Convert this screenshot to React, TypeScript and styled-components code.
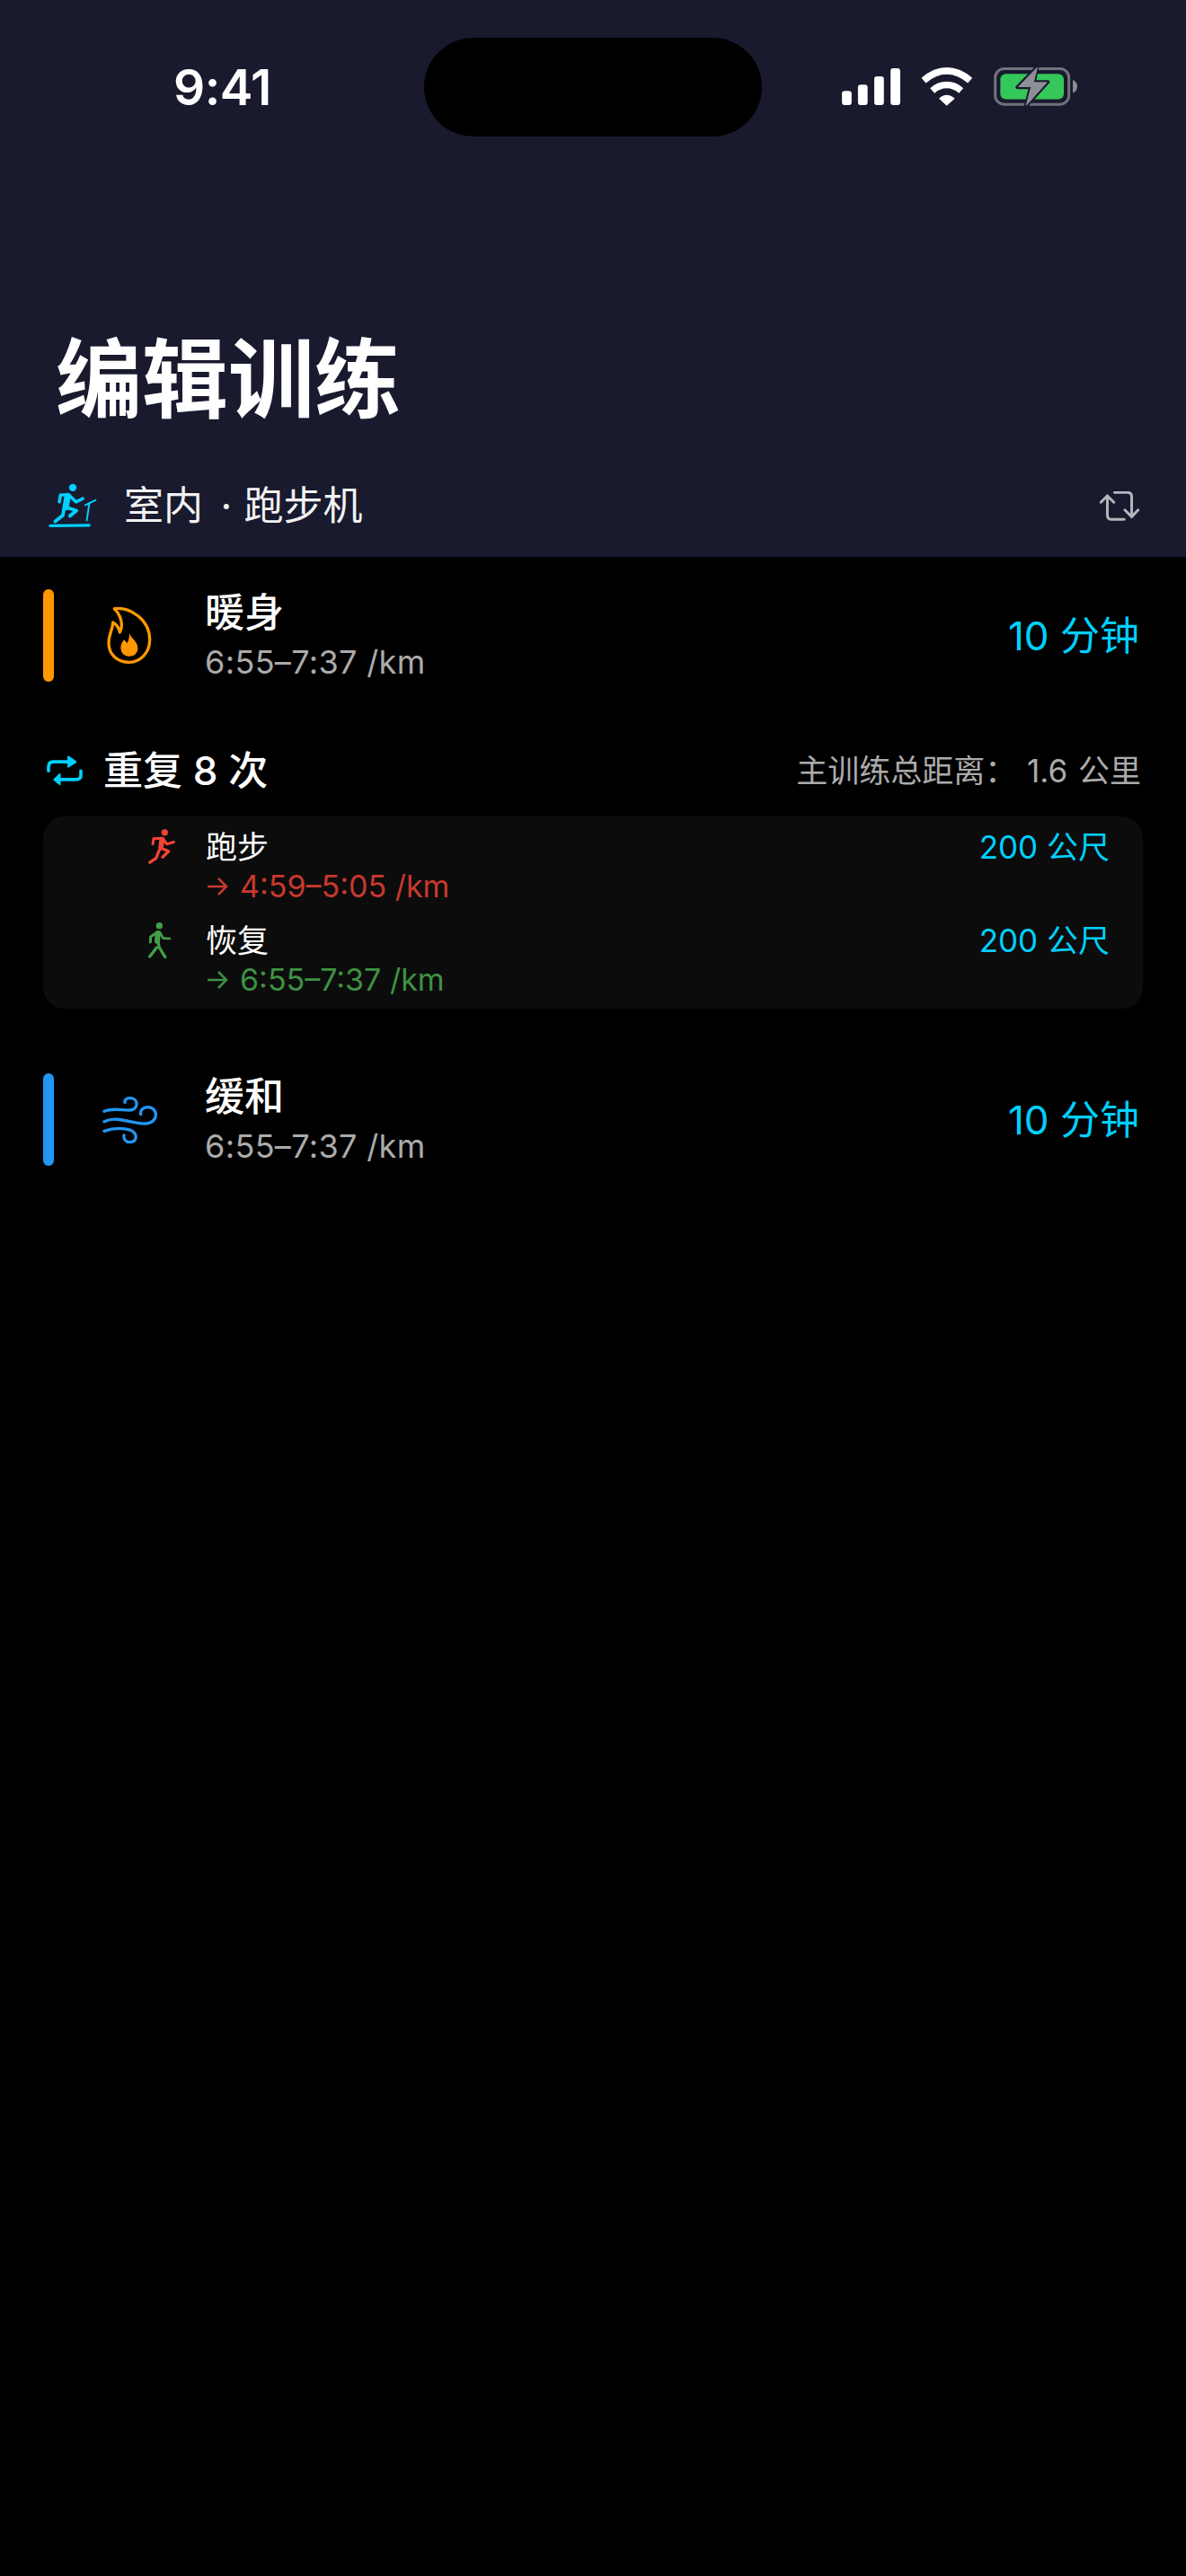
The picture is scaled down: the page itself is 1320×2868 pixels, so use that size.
import React from "react";
import styled, { createGlobalStyle } from "styled-components";

const FONT = `Inter, "Noto Sans CJK SC", sans-serif`;
const HEADER = "#191a2e";
const CYAN = "#00d0ff";

const Global = createGlobalStyle`
  html, body { margin: 0; padding: 0; background: #000; }
  * { box-sizing: border-box; }
`;

const Page = styled.div`
  width: 1320px;
  min-height: 2868px;
  background: #000;
  color: #fff;
  font-family: ${FONT};
`;

const Header = styled.header`
  height: 620px;
  background: ${HEADER};
  display: flex;
  flex-direction: column;
`;

const StatusBar = styled.div`
  display: grid;
  grid-template-columns: 472px 376px 1fr;
  padding-top: 42px;
  height: 152px;
`;

const Time = styled.div`
  padding-left: 193px;
  font-size: 55px;
  font-weight: 600;
  line-height: 110px;
  letter-spacing: -0.5px;
`;

const Island = styled.div`
  height: 110px;
  border-radius: 55px;
  background: #000;
`;

const StatusIcons = styled.div`
  display: flex;
  align-items: center;
  padding-left: 89px;
  gap: 23px;
  height: 110px;
  margin-top: -1px;
`;

const Title = styled.h1`
  margin: 222px 0 0;
  padding-left: 62px;
  font-size: 96px;
  line-height: 96px;
  font-weight: 700;
`;

const ModeRow = styled.div`
  margin-top: 63px;
  height: 60px;
  display: flex;
  align-items: center;
  padding: 0 52px 0 54px;
`;

const ModeLabel = styled.span`
  margin-left: 30px;
  flex: 1;
  font-size: 44px;
  line-height: 60px;
  color: #f2f2f2;
  font-weight: 400;
`;

const ModeDot = styled.span`
  margin: 0 1px 0 7px;
`;

const Main = styled.main`
  padding: 36px 48px 0;
`;

const Row = styled.section<{ $gap?: number }>`
  display: flex;
  align-items: stretch;
  height: 103px;
  padding-right: 4px;
  margin-top: ${(p) => p.$gap ?? 0}px;
`;

const Accent = styled.div<{ $color: string }>`
  width: 12px;
  border-radius: 6px;
  background: ${(p) => p.$color};
`;

const IconSlot = styled.div<{ $left: number }>`
  width: 168px;
  padding-left: ${(p) => p.$left}px;
  display: flex;
  align-items: center;
`;

const RowText = styled.div`
  flex: 1;
  display: flex;
  flex-direction: column;
  justify-content: center;
`;

const RowTitle = styled.div`
  font-size: 44px;
  line-height: 56px;
  font-weight: 500;
  margin-top: -2px;
`;

const RowSub = styled.div`
  font-size: 36px;
  line-height: 46px;
  letter-spacing: 0.35px;
  color: #ababab;
  margin-top: 4px;
`;

const RowValue = styled.div`
  align-self: center;
  font-size: 44px;
  line-height: 56px;
  color: ${CYAN};
`;

const RepeatRow = styled.div`
  margin-top: 69px;
  height: 60px;
  display: flex;
  align-items: center;
  padding-left: 4px;
`;

const RepeatTitle = styled.span`
  margin-left: 23px;
  flex: 1;
  font-size: 44px;
  line-height: 60px;
  font-weight: 500;
`;

const RepeatTotal = styled.span`
  font-size: 35px;
  line-height: 60px;
  color: #ababab;
  margin-right: 2px;
  word-spacing: 2px;
`;

const Panel = styled.div`
  margin-top: 21px;
  background: #0c0c0c;
  border-radius: 24px;
  padding: 11px 37px 11px 117px;
  display: flex;
  flex-direction: column;
  gap: 16px;
`;

const Step = styled.div`
  display: grid;
  grid-template-columns: 64px 1fr auto;
  grid-template-rows: 44px 44px;
`;

const StepIcon = styled.div`
  grid-row: 1 / 3;
  padding-top: 3px;
`;

const StepTitle = styled.div`
  font-size: 35px;
  line-height: 44px;
  font-weight: 400;
  margin-top: 1px;
`;

const StepValue = styled.div`
  font-size: 35px;
  line-height: 44px;
  color: ${CYAN};
  margin-top: 1px;
`;

const StepPace = styled.div<{ $color: string }>`
  grid-column: 2 / 4;
  font-size: 34px;
  line-height: 44px;
  padding: 2px 0 0 2px;
  color: ${(p) => p.$color};
  display: flex;
  align-items: center;
  gap: 13px;
`;

const Svg = styled.svg`
  display: block;
  flex: none;
`;

const Signal = () => (
  <Svg width="65" height="41" viewBox="112 108 193 122">
    <rect x="112" y="183" width="32" height="47" rx="9" fill="#fff" />
    <rect x="165" y="162" width="32" height="68" rx="9" fill="#fff" />
    <rect x="219" y="135" width="32" height="95" rx="9" fill="#fff" />
    <rect x="273" y="108" width="32" height="122" rx="9" fill="#fff" />
  </Svg>
);

const Wifi = () => (
  <Svg width="58" height="43" viewBox="375 104 172 129">
    <path d="M383 148C432 105 488 105 538 148" fill="none" stroke="#fff" strokeWidth="23" />
    <path d="M412 182C440 156 480 156 508 182" fill="none" stroke="#fff" strokeWidth="22" />
    <path d="M434 208C450 192 470 192 487 208L460 232Z" fill="#fff" />
  </Svg>
);

const Battery = () => (
  <Svg width="93" height="47" viewBox="615 100 279 140">
    <rect x="620" y="110" width="246" height="119" rx="30" fill="none" stroke="#72727c" strokeWidth="9" />
    <rect x="637" y="127" width="212" height="85" rx="18" fill="#34c759" />
    <path d="M879 148C889 150 894 160 894 169C894 178 889 188 879 190Z" fill="#8a8a92" />
    <path
      d="M760 104L694 172L738 172L722 236L796 154L750 154Z"
      fill="#8e8e96"
      stroke={HEADER}
      strokeWidth="12"
      strokeLinejoin="round"
    />
    <path d="M760 106L698 170L740 170L724 232L792 156L748 156Z" fill="#8e8e96" stroke="#8e8e96" strokeWidth="3" strokeLinejoin="round" />
  </Svg>
);

const Treadmill = () => (
  <Svg width="54" height="50" viewBox="70 80 164 154">
    <circle cx="152" cy="95" r="13" fill={CYAN} />
    <g fill="none" stroke={CYAN} strokeLinecap="round" strokeLinejoin="round">
      <path d="M134 124L128 162" strokeWidth="22" />
      <path d="M134 120L110 120L106 144" strokeWidth="11" />
      <path d="M140 122L163 144L186 133" strokeWidth="11" />
      <path d="M128 162L165 174L142 192" strokeWidth="12" />
      <path d="M122 165L118 190L92 211" strokeWidth="12" />
      <path d="M75 226L208 224" strokeWidth="10" />
      <path d="M200 207L209 148" strokeWidth="6" />
      <path d="M195 155L230 138" strokeWidth="6" />
    </g>
  </Svg>
);

const Swap = () => (
  <Svg width="45" height="33" viewBox="100 78 135 100">
    <g fill="none" stroke="#b6b6bb" strokeWidth="9" strokeLinecap="round" strokeLinejoin="round">
      <path d="M106 115L128 93L150 115" />
      <path d="M128 94L128 158Q128 173 143 173L185 173" />
      <path d="M152 82L196 82Q210 82 210 97L210 163" />
      <path d="M187 141L210 164L232 141" />
    </g>
  </Svg>
);

const Flame = () => (
  <Svg width="50" height="65" viewBox="265 498 150 195">
    <path
      d="M290 506C340 500 408 540 408 610C408 655 375 685 340 685C300 685 271 660 271 620C271 590 285 575 285 552C298 558 305 572 308 585C322 560 310 525 290 506Z"
      fill="none"
      stroke="#ff9800"
      strokeWidth="10"
      strokeLinejoin="round"
    />
    <path
      d="M340 588C345 605 368 615 368 638C368 655 355 665 340 665C322 665 311 652 311 635C311 625 318 615 322 610C328 615 330 618 332 622C338 612 340 600 340 588Z"
      fill="#ff9800"
    />
  </Svg>
);

const Wind = () => (
  <Svg width="62" height="54" viewBox="250 150 186 162">
    <g fill="none" stroke="#2196f3" strokeWidth="10" strokeLinecap="round">
      <path d="M256 202C285 190 310 198 340 198C372 198 372 158 342 157C330 157 323 165 325 172" />
      <path d="M256 236C300 215 350 245 395 243C438 240 438 190 402 188C385 188 375 200 378 212" />
      <path d="M256 268C290 255 325 258 345 265C372 280 362 305 342 305C328 305 320 295 322 282" />
    </g>
  </Svg>
);

const RepeatIcon = () => (
  <Svg width="40" height="34" viewBox="65 94 121 102">
    <g fill="none" stroke={CYAN} strokeWidth="11" strokeLinecap="round">
      <path d="M71 146L71 132Q71 115 88 115L145 115" />
      <path d="M180 146L180 160Q180 175 164 175L105 175" />
    </g>
    <path d="M135 98Q135 93 140 96L163 112Q167 115 163 119L140 134Q135 137 135 132Z" fill={CYAN} />
    <path d="M112 158Q112 153 107 155L89 172Q85 175 89 178L107 193Q112 197 112 192Z" fill={CYAN} />
  </Svg>
);

const Runner = () => (
  <Svg width="30" height="39" viewBox="0 0 90 116">
    <circle cx="55" cy="11" r="11" fill="#f44336" />
    <g fill="none" stroke="#f44336" strokeLinecap="round" strokeLinejoin="round">
      <path d="M46 34L42 62" strokeWidth="17" />
      <path d="M44 30L18 32L15 50" strokeWidth="9" />
      <path d="M50 32L62 50L85 43" strokeWidth="9" />
      <path d="M40 62L68 74L48 93" strokeWidth="10" />
      <path d="M36 72L26 97L5 111" strokeWidth="10" />
    </g>
  </Svg>
);

const Walker = () => (
  <Svg width="25" height="40" viewBox="0 0 75 120">
    <circle cx="37" cy="11" r="11" fill="#43a047" />
    <g fill="none" stroke="#43a047" strokeLinecap="round" strokeLinejoin="round">
      <path d="M32 36L30 62" strokeWidth="18" />
      <path d="M28 34L8 48L7 66" strokeWidth="9" />
      <path d="M38 32L50 53L72 54" strokeWidth="8" />
      <path d="M32 62L37 84L56 115" strokeWidth="10" />
      <path d="M28 84L5 114" strokeWidth="10" />
    </g>
  </Svg>
);

const Arrow = ({ color }: { color: string }) => (
  <Svg width="23" height="22" viewBox="0 0 23 22">
    <path d="M0 11L21 11M12 2L21 11L12 20" fill="none" stroke={color} strokeWidth="2.5" />
  </Svg>
);

const RED = "#c8392e";
const GREEN = "#3f9142";

export default function App() {
  return (
    <Page>
      <Global />
      <Header>
        <StatusBar>
          <Time>9:41</Time>
          <Island />
          <StatusIcons>
            <Signal />
            <Wifi />
            <Battery />
          </StatusIcons>
        </StatusBar>
        <Title>编辑训练</Title>
        <ModeRow>
          <Treadmill />
          <ModeLabel>
            室内 <ModeDot>·</ModeDot> 跑步机
          </ModeLabel>
          <Swap />
        </ModeRow>
      </Header>
      <Main>
        <Row>
          <Accent $color="#ff9800" />
          <IconSlot $left={59}>
            <Flame />
          </IconSlot>
          <RowText>
            <RowTitle>暖身</RowTitle>
            <RowSub>6:55–7:37 /km</RowSub>
          </RowText>
          <RowValue>10 分钟</RowValue>
        </Row>
        <RepeatRow>
          <RepeatIcon />
          <RepeatTitle>重复 8 次</RepeatTitle>
          <RepeatTotal>主训练总距离： 1.6 公里</RepeatTotal>
        </RepeatRow>
        <Panel>
          <Step>
            <StepIcon>
              <Runner />
            </StepIcon>
            <StepTitle>跑步</StepTitle>
            <StepValue>200 公尺</StepValue>
            <StepPace $color={RED}>
              <Arrow color={RED} />
              4:59–5:05 /km
            </StepPace>
          </Step>
          <Step>
            <StepIcon>
              <Walker />
            </StepIcon>
            <StepTitle>恢复</StepTitle>
            <StepValue>200 公尺</StepValue>
            <StepPace $color={GREEN}>
              <Arrow color={GREEN} />
              6:55–7:37 /km
            </StepPace>
          </Step>
        </Panel>
        <Row $gap={72}>
          <Accent $color="#2196f3" />
          <IconSlot $left={54}>
            <Wind />
          </IconSlot>
          <RowText>
            <RowTitle>缓和</RowTitle>
            <RowSub>6:55–7:37 /km</RowSub>
          </RowText>
          <RowValue>10 分钟</RowValue>
        </Row>
      </Main>
    </Page>
  );
}
